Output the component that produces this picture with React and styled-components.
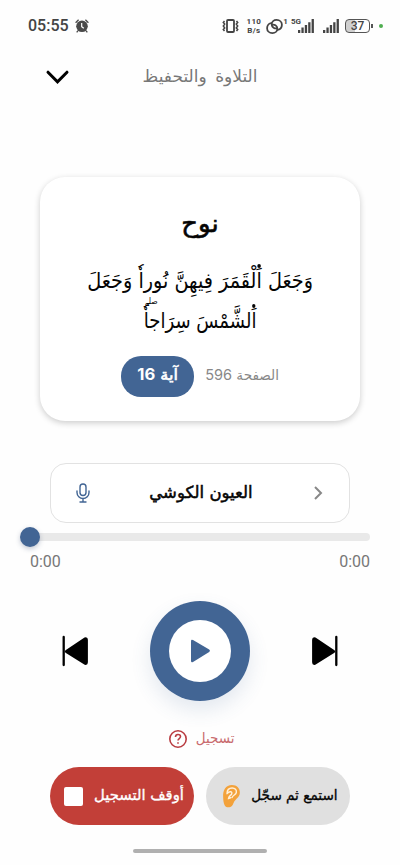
import React from "react";
import styled, { createGlobalStyle } from "styled-components";

const Global = createGlobalStyle`
  *{box-sizing:border-box}
  body{margin:0;background:#fefefe;font-family:"Inter","DejaVu Sans",sans-serif}
  button{border:0;padding:0;background:none;font:inherit;color:inherit}
`;
const Screen = styled.main`
  width:400px;height:865px;display:flex;flex-direction:column;overflow:hidden;background:#fefefe;
`;
const StatusBar = styled.header`
  height:52px;padding:0 17px 0 28px;display:flex;align-items:center;color:#444;
`;
const Clock = styled.time`
  font:500 16px/20px Roboto,sans-serif;width:47px;white-space:nowrap;
`;
const StatusIcons = styled.div`
  margin-left:auto;display:flex;align-items:center;height:20px;
`;
const Rate = styled.div`
  width:17px;margin:0 4px 0 6px;display:flex;flex-direction:column;align-items:center;
  font:700 8px/9px Roboto,sans-serif;letter-spacing:.3px;
`;
const Network = styled.div`
  display:flex;align-items:flex-start;gap:3px;height:16px;margin-right:-3px;font:700 8px/8px Roboto,sans-serif;
`;
const Spacer = styled.i`width:9px;`;
const Battery = styled.div`
  width:25px;height:14px;border:1.5px solid #555;border-radius:4px;margin-left:6px;
  background:linear-gradient(90deg,#d0d0d0 40%,#fefefe 40%);
  font:500 12px/12px Roboto,sans-serif;display:flex;align-items:center;justify-content:center;
`;
const BatteryTip = styled.i`width:2px;height:4px;background:#555;margin-left:1px;`;
const PrivacyDot = styled.i`width:4px;height:4px;border-radius:50%;background:#4fae50;margin-left:6px;`;
const TitleBar = styled.div`
  height:50px;display:grid;grid-template-columns:115px 170px 115px;align-items:center;
  svg{margin-left:45px;display:block}
`;
const Arabic = styled.span`
  display:flex;justify-content:center;direction:rtl;white-space:nowrap;
  font-family:"DejaVu Sans",sans-serif;font-size:${p => p.$size}px;
  -webkit-text-stroke:${p => p.$stroke || 0}px currentColor;
  word-spacing:${p => p.$gap || 0}px;
  line-height:${p => p.$line || 24}px;color:${p => p.$color || "#050505"};
  transform:translateY(${p => p.$shift || 0}px) scaleX(${p => p.$fit || 1});
`;
const VerseCard = styled.section`
  margin:75px 40px 0;height:244px;border-radius:25px;background:#fff;
  box-shadow:0 2px 6px rgba(0,0,0,.2);display:flex;flex-direction:column;align-items:center;
`;
const Surah = styled.h1`margin:32px 0 0;height:32px;font-weight:400;`;
const Verse = styled.div`margin-top:20px;height:80px;`;
/* Recitation marks stacked over the letter they belong to. */
const Marked = styled.span`position:relative;display:inline;`;
const WaslDot = styled.i`
  position:absolute;top:-4px;right:1px;width:4px;height:4px;border-radius:50%;background:#050505;
`;
const PauseMark = styled.small`
  position:absolute;top:-13px;left:1px;font-size:9px;line-height:12px;
`;
const Meta = styled.div`
  width:160px;height:41px;margin:15px 0 0 2px;display:flex;gap:12px;
`;
const AyahBadge = styled.div`
  width:73px;height:41px;border-radius:20px;background:#426594;display:flex;justify-content:center;padding-top:6px;
`;
const AyahText = styled.span`display:flex;align-items:baseline;`;
const PageLabel = styled.div`width:73px;height:38px;display:flex;align-items:center;justify-content:center;`;
const Num = styled.b`
  font-family:Inter,sans-serif;font-size:${p => p.$light ? 15 : 16}px;font-weight:${p => p.$light ? 400 : 700};
  -webkit-text-stroke:0;
`;
const Reciter = styled.button`
  margin:42px 50px 0;width:300px;height:60px;border:1px solid #e2e2e2;border-radius:16px;background:#fff;
  display:grid;grid-template-columns:64px 1fr 62px;align-items:center;justify-items:center;
`;
const Slider = styled.div`
  margin:9px 30px 0;height:10px;display:flex;align-items:center;
`;
const Track = styled.div`
  width:340px;height:8px;border-radius:4px;background:#e9e9e9;display:flex;align-items:center;
`;
const Thumb = styled.i`
  width:20px;height:20px;border-radius:50%;background:#426594;margin-left:-10px;flex:none;
  box-shadow:0 2px 5px rgba(50,70,110,.3);
`;
const Times = styled.div`
  margin:10px 30px 0;height:20px;display:flex;justify-content:space-between;
  font:400 16px/20px Roboto,sans-serif;color:#777;
`;
const Controls = styled.div`
  margin:29px 61px 0;height:100px;display:flex;align-items:center;justify-content:space-between;
`;
const Play = styled.button`
  width:100px;height:100px;border-radius:50%;background:#426594;display:grid;place-items:center;
  box-shadow:0 9px 20px rgba(66,101,148,.14);
`;
const PlayDisc = styled.span`
  width:62px;height:62px;border-radius:50%;background:#fff;display:grid;place-items:center;
`;
const RecordHint = styled.div`
  margin-top:25px;height:26px;display:flex;justify-content:center;align-items:center;gap:7px;padding-left:3px;
`;
const Actions = styled.div`
  margin:15px 50px 0;height:58px;display:grid;grid-template-columns:144px 144px;gap:12px;
`;
const Action = styled.button`
  height:58px;border-radius:29px;background:${p => p.$stop ? "#c23f38" : "#e0e0e0"};
  display:grid;grid-template-columns:${p => p.$stop ? "20px 92px" : "24px 88px"};
  column-gap:${p => p.$stop ? 10 : 7}px;padding-left:13px;align-items:center;justify-items:center;
`;
const Stop = styled.i`width:19px;height:19px;border-radius:2px;background:#fff;`;
const HomeBar = styled.i`width:134px;height:4px;border-radius:2px;background:#b0b0b0;margin:24px auto 0;`;

const Alarm = () => (
  <svg width="14" height="14" viewBox="0 0 14 14">
    <circle cx="7" cy="7.3" r="5.8" fill="#4a4a4a" />
    <path d="M.6 3.7 3.6.7M13.4 3.7 10.4.7M3 11.7l-1.3 1.6M11 11.7l1.3 1.6" stroke="#4a4a4a" strokeWidth="1.3" />
    <path d="M6.7 4v3.6l2.1 1.7" fill="none" stroke="#fff" strokeWidth="1.2" />
  </svg>
);
const Vibrate = () => (
  <svg width="17" height="14" viewBox="0 0 17 14" fill="none" stroke="#444">
    <rect x="5" y="1" width="7" height="12" rx="1" strokeWidth="1.8" />
    <path d="m2.5 2-1.2 1.5L2.7 5 1.3 7l1.4 2-1.4 1.5L2.5 12M14.5 2l1.2 1.5L14.3 5l1.4 2-1.4 2 1.4 1.5-1.2 1.5" strokeWidth="1.5" />
  </svg>
);
const Link = () => (
  <svg width="17" height="15" viewBox="0 0 17 15" fill="none" stroke="#444" strokeWidth="1.8" strokeLinecap="round">
    <path d="M11.3 9.2C8.8 10 5.7 8.3 5.7 5.3c0-2.6 2.2-4.4 4.9-4.4 3.1 0 5.3 2.1 5.3 4.9 0 2.6-1.8 4.6-4.1 5.2" />
    <path d="M5.7 5.8c2.5-.8 5.6.9 5.6 3.9 0 2.6-2.2 4.4-4.9 4.4-3.1 0-5.3-2.1-5.3-4.9 0-2.6 1.8-4.6 4.1-5.2" />
  </svg>
);
const Signal = () => (
  <svg width="16" height="14" viewBox="0 0 16 14" fill="#444">
    <path d="M0 11h2.3v3H0zM3.4 8.5h2.3V14H3.4zM6.8 6h2.3v8H6.8zM10.2 3.3h2.3V14h-2.3zM13.6 0h2.3v14h-2.3z" />
  </svg>
);
const Skip = ({ next }) => (
  <svg width="28" height="32" viewBox="0 0 28 32">
    <g transform={next ? "translate(28) scale(-1 1)" : undefined}>
      <path d="M2.7 2v28" stroke="#000" strokeWidth="2.3" strokeLinecap="round" />
      <path d="M4.5 15.2 23.5 2.4q3.4-1 3.4 2.4v22.5q0 3.2-3.2 2.5L4.5 17.8q-1.6-1.3 0-2.6Z" />
    </g>
  </svg>
);
const Ear = () => (
  <svg width="19" height="25" viewBox="0 0 20 26" preserveAspectRatio="none">
    <path d="M1.2 13.5C.8 6.4 3.8 1 10.4 1c5.4 0 8.6 3.7 8.4 8-.2 5.1-4.7 6.2-6.5 10.4-1 2.4-2.1 4.9-5.7 4.9-3.8 0-5.2-3.6-5.4-10.8Z" fill="#f3a23b" />
    <path d="M5.3 10c0-4 2.4-5.9 5.4-5.9 3.1 0 4.8 2.1 4.4 4.5-.4 2.7-3.5 2.8-4.5 5.4M5.3 10c3-3.5 6-1.8 4.8.5-.8 1.5-3 1.8-3.2 4.5l2.1-.7" fill="none" stroke="#fff0d9" strokeWidth="1.5" strokeLinecap="round" />
  </svg>
);

export default function App() {
  return (
    <>
      <Global />
      <Screen>
        <StatusBar>
          <Clock>05:55</Clock><Alarm />
          <StatusIcons>
            <Vibrate />
            <Rate><span>110</span><span>B/s</span></Rate>
            <Link />
            <Network><span>1</span><span>5G</span></Network>
            <Signal />
            <Spacer />
            <Signal />
            <Battery>37</Battery><BatteryTip /><PrivacyDot />
          </StatusIcons>
        </StatusBar>
        <TitleBar>
          <svg width="26" height="16" viewBox="0 0 26 16"><path d="m3 3.2 9.5 9.6L22 3.2" fill="none" stroke="#000" strokeWidth="3" strokeLinecap="round" /></svg>
          <Arabic $size={16.5} $gap={3} $fit={1.03} $color="#777">التلاوة والتحفيظ</Arabic>
        </TitleBar>
        <VerseCard>
          <Surah><Arabic $size={25} $line={32} $stroke={0.6} $shift={-1} $fit={1.04}>نوح</Arabic></Surah>
          <Verse>
            <Arabic $size={21.5} $line={40} $fit={0.895}><span>وَجَعَلَ <Marked>اَ<WaslDot /></Marked>لْقَمَرَ فِيهِنَّ نُوراٗ وَجَعَلَ</span></Arabic>
            <Arabic $size={21.5} $line={40} $fit={0.84}><span><Marked>اَ<WaslDot /></Marked>لشَّمْسَ <Marked>سِرَاجاٗ<PauseMark>صلے</PauseMark></Marked></span></Arabic>
          </Verse>
          <Meta>
            <AyahBadge>
              <Arabic $size={15.5} $stroke={0.6} $fit={1.04} $color="#fff"><AyahText>آية&nbsp;<Num>16</Num></AyahText></Arabic>
            </AyahBadge>
            <PageLabel><Arabic $size={14} $fit={0.97} $color="#888">الصفحة&nbsp;<Num $light>596</Num></Arabic></PageLabel>
          </Meta>
        </VerseCard>
        <Reciter>
          <svg width="14" height="20" viewBox="0 0 14 20" fill="none" stroke="#426594" strokeWidth="1.4" strokeLinecap="round"><rect x="4" y="1" width="6" height="11.5" rx="3" /><path d="M1 8v1.5a6 6 0 0 0 12 0V8M7 15.5V19M4 19h6" /></svg>
          <Arabic $size={16.5} $stroke={0.5}>العيون الكوشي</Arabic>
          <svg width="10" height="16" viewBox="0 0 10 16"><path d="m2 2 6 6-6 6" fill="none" stroke="#888" strokeWidth="2" /></svg>
        </Reciter>
        <Slider><Track><Thumb /></Track></Slider>
        <Times><span>0:00</span><span>0:00</span></Times>
        <Controls>
          <Skip />
          <Play><PlayDisc><svg width="22" height="24" viewBox="0 0 22 24"><path d="M2 2.2Q2 0 4 1.1l16.2 9.5q1.6 1.2 0 2.4L4 23q-2 1-2-1.2Z" fill="#426594" /></svg></PlayDisc></Play>
          <Skip next />
        </Controls>
        <RecordHint>
          <svg width="20" height="20" viewBox="0 0 20 20" fill="none" stroke="#b93d42" strokeWidth="1.6"><circle cx="10" cy="10" r="8.2" /><path d="M7.5 8c0-3.5 5-3.2 5-.4 0 2-2.5 1.9-2.5 4M10 13.3v1.5" /></svg>
          <Arabic $size={14} $fit={0.96} $shift={-1} $color="#c96b6e">تسجيل</Arabic>
        </RecordHint>
        <Actions>
          <Action $stop><Stop /><Arabic $size={14.8} $stroke={0.35} $shift={-1} $color="#fff">أوقف التسجيل</Arabic></Action>
          <Action><Ear /><Arabic $size={14} $stroke={0.35} $fit={0.97} $shift={-1}>استمع ثم سجّل</Arabic></Action>
        </Actions>
        <HomeBar />
      </Screen>
    </>
  );
}
